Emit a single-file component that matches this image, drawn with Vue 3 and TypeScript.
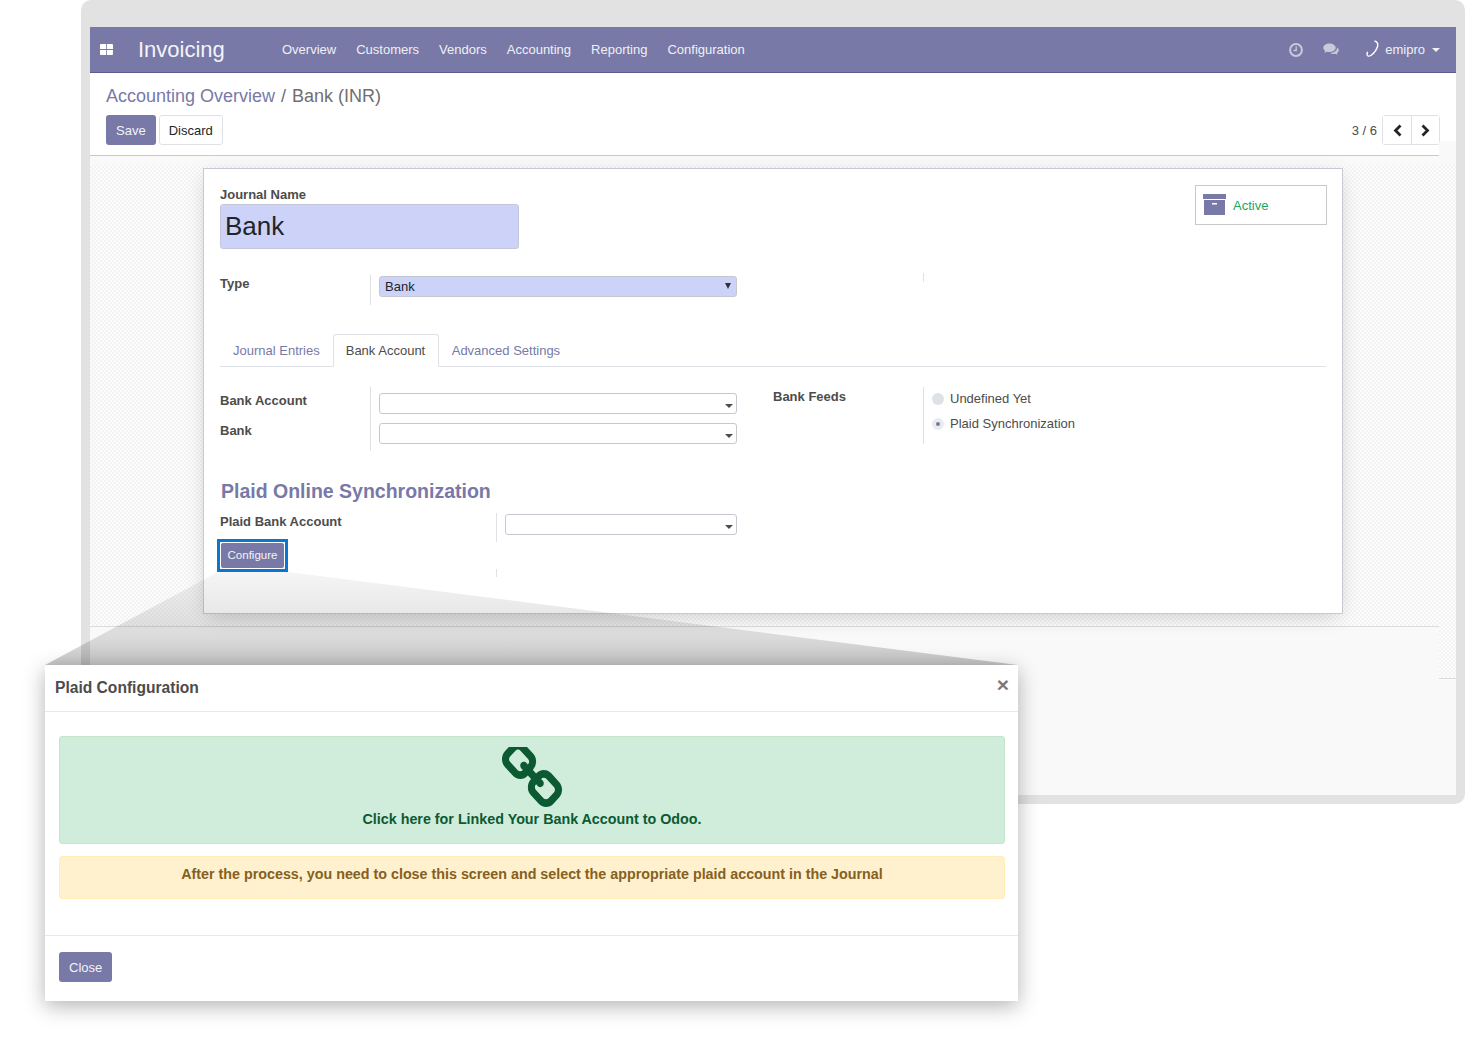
<script setup lang="ts">
const menus: string[] = ['Overview', 'Customers', 'Vendors', 'Accounting', 'Reporting', 'Configuration']
</script>

<template>
  <div class="root">
    <div class="window">
      <div class="app">
        <nav class="navbar">
          <svg class="apps" width="13" height="11" viewBox="0 0 13 11"><path d="M1 0h4.800a.4.400 0 0 1 .4.4V5H0V1a1 1 0 0 1 1-1zM7 0h5a1 1 0 0 1 1 1V5H7zM0 6h6.200v5H1a1 1 0 0 1-1-1zM7 6h6v4a1 1 0 0 1-1 1H7z" fill="#fff"/></svg>
          <span class="brand">Invoicing</span>
          <div class="menu"><span v-for="m in menus" :key="m">{{ m }}</span></div>
          <div class="systray">
            <svg width="14" height="14" viewBox="0 0 14 14" class="tray-icon"><circle cx="7" cy="7" r="5.900" fill="none" stroke="#c9c9dc" stroke-width="2"/><path d="M7.200 3.500V7.500H4.500" fill="none" stroke="#c9c9dc" stroke-width="1.300"/></svg>
            <svg width="16" height="13" viewBox="0 0 16 13" class="tray-icon chat"><path d="M6.500 0.500C3 .5.300 2.400.300 4.800c0 1.300.8 2.500 2 3.300-.2.600-.6 1.200-1.100 1.700 1.100-.1 2-.5 2.800-1 .8.200 1.600.3 2.500.3 3.400 0 6.200-1.900 6.200-4.300S9.900.5 6.500.5z" fill="#c9c9dc"/><path d="M14 4.200c.1.200.1.400.1.600 0 3-3.100 5.100-6.800 5.200.9.700 2.100 1 3.300 1 .6 0 1.200-.1 1.800-.2.700.5 1.500.8 2.300 1-.3-.5-.6-1-.8-1.500 1.200-.8 1.900-1.900 1.900-3 0-1.100-.7-2.300-1.800-3.100z" fill="#c9c9dc"/></svg>
            <svg width="14" height="18" viewBox="0 0 14 18" class="avatar"><path d="M8.500 1C11 1.500 12.300 3.500 11.500 6.500 10.700 9.500 8 13 5.500 15 4 16.200 2 16.600 1.300 15.200.9 14.300 1 13 1.700 11.800" fill="none" stroke="#fff" stroke-width="1.400"/></svg>
            <span class="user">emipro</span>
            <span class="caret"></span>
          </div>
        </nav>

        <header class="panel">
          <div class="crumbs"><span class="crumb-link">Accounting Overview</span><span class="crumb-sep">/</span><span>Bank (INR)</span></div>
          <div class="panel-row">
            <div class="actions">
              <button class="btn primary">Save</button>
              <button class="btn plain">Discard</button>
            </div>
            <div class="pager">
              <span class="pager-text">3 / 6</span>
              <div class="pager-btns">
                <button class="pg"><svg width="10" height="13" viewBox="0 0 10 13"><path d="M8.500 1.500L3.500 6.500l5 5" fill="none" stroke="#212529" stroke-width="2.800"/></svg></button>
                <button class="pg"><svg width="10" height="13" viewBox="0 0 10 13"><path d="M1.500 1.500l5 5-5 5" fill="none" stroke="#212529" stroke-width="2.800"/></svg></button>
              </div>
            </div>
          </div>
        </header>

        <div class="content">
          <div class="canvas">
            <section class="sheet">
              <div class="title-row">
                <div>
                  <div class="label name-label">Journal Name</div>
                  <div class="name-input">Bank</div>
                </div>
                <div class="stat">
                  <svg width="23" height="22" viewBox="0 0 23 22"><rect x="0" y="0" width="23" height="5" fill="#7879a7"/><rect x="1" y="6" width="21" height="15" fill="#7879a7"/><rect x="9" y="9" width="5" height="1.500" fill="#fff"/></svg>
                  <span>Active</span>
                </div>
              </div>

              <div class="type-row">
                <div class="label side-label">Type</div>
                <div class="divider type-div">
                  <div class="select req">Bank<span class="tri-native"></span></div>
                </div>
                <i class="tick"></i>
              </div>

              <div class="tabs">
                <span class="tab">Journal Entries</span>
                <span class="tab active">Bank Account</span>
                <span class="tab">Advanced Settings</span>
              </div>

              <div class="columns">
                <div class="col-left">
                  <div class="labels">
                    <div class="label">Bank Account</div>
                    <div class="label">Bank</div>
                  </div>
                  <div class="divider fields">
                    <div class="select"><span class="tri"></span></div>
                    <div class="select"><span class="tri"></span></div>
                  </div>
                </div>
                <div class="col-right">
                  <div class="label feeds-label">Bank Feeds</div>
                  <div class="divider radios">
                    <div class="radio"><i class="dot"></i>Undefined Yet</div>
                    <div class="radio"><i class="dot on"></i>Plaid Synchronization</div>
                  </div>
                </div>
              </div>

              <h2 class="section">Plaid Online Synchronization</h2>
              <div class="plaid-grid">
                <div class="label plaid-label">Plaid Bank Account</div>
                <div class="divider plaid-field"><div class="select"><span class="tri"></span></div></div>
                <div class="configure-cell"><div class="focus-ring"><button class="configure">Configure</button></div></div>
                <div class="divider plaid-tick"></div>
              </div>
            </section>
          </div>
          <div class="side-strip"></div>
        </div>
      </div>
    </div>

    <div class="wedge"></div>

    <div class="modal">
      <div class="modal-head">
        <span>Plaid Configuration</span>
        <span class="close-x">×</span>
      </div>
      <div class="modal-body">
        <div class="alert green">
          <svg width="60" height="60" viewBox="80 144 1632 1504" preserveAspectRatio="none" class="chain">
            <path fill="#0b5a32" d="M1520 1216q0-40-28-68l-208-208q-28-28-68-28-42 0-72 32 3 3 19 18.500t21.500 21.500 15 19 13 25.500 3.500 27.500q0 40-28 68t-68 28q-15 0-27.500-3.500t-25.500-13-19-15-21.500-21.500-18.500-19q-33 31-33 73 0 40 28 68l206 207q27 27 68 27 40 0 68-26l147-146q28-28 28-67zm-703-705q0-40-28-68l-206-207q-28-28-68-28-39 0-68 27l-147 146q-28 28-28 67 0 40 28 68l208 208q27 27 68 27 42 0 72-31-3-3-19-18.500t-21.500-21.500-15-19-13-25.500-3.500-27.500q0-40 28-68t68-28q15 0 27.500 3.500t25.500 13 19 15 21.500 21.500 18.500 19q33-31 33-73zm895 705q0 120-85 203l-147 146q-83 83-203 83-121 0-204-85l-206-207q-83-83-83-203 0-123 88-209l-88-88q-86 88-208 88-120 0-204-84l-208-208q-84-84-84-204t85-203l147-146q83-83 203-83 121 0 204 85l206 207q83 83 83 203 0 123-88 209l88 88q86-88 208-88 120 0 204 84l208 208q84 84 84 204z"/>
          </svg>
          <div class="green-text">Click here for Linked Your Bank Account to Odoo.</div>
        </div>
        <div class="alert yellow">After the process, you need to close this screen and select the appropriate plaid account in the Journal</div>
      </div>
      <div class="modal-foot"><button class="btn primary">Close</button></div>
    </div>
  </div>
</template>

<style>
body { margin: 0; background: #fff; }
</style>

<style scoped>
* { box-sizing: border-box; }
.root {
  position: relative;
  width: 1465px;
  height: 1049px;
  overflow: hidden;
  background: #fff;
  font-family: "Liberation Sans", Arial, sans-serif;
  font-size: 13px;
  color: #4c4c4c;
}
.window {
  position: absolute;
  left: 81px;
  top: 0;
  width: 1384px;
  height: 804px;
  padding: 27px 9px 9px;
  background: #e2e2e2;
  border-radius: 10px;
}
.app {
  height: 768px;
  background: #f9f9f9;
  display: flex;
  flex-direction: column;
}
.navbar {
  height: 46px;
  background: #7879a7;
  border-bottom: 1px solid #5c5d8c;
  display: flex;
  align-items: center;
  color: #fff;
  flex: none;
}
.apps { margin-left: 10px; flex: none; }
.brand { margin-left: 25px; font-size: 22px; width: 144px; color: #f3f3f8; }
.menu { display: flex; gap: 20px; color: #f0f0f5; }
.systray { margin-left: auto; display: flex; align-items: center; padding-right: 16px; }
.tray-icon { display: block; margin-right: 20px; }
.chat { margin-right: 27px; }
.avatar { margin-right: 5px; margin-top: -2px; }
.user { color: #f0f0f5; }
.caret { margin-left: 7px; border: 4px solid transparent; border-top-color: #f0f0f5; border-bottom: 0; }

.panel { height: 83px; background: #fff; border-bottom: 1px solid #c9c9c9; padding: 11px 16px 0; flex: none; position: relative; }
.crumbs { font-size: 18px; line-height: 24px; color: #6f6f6f; display: flex; }
.crumb-link { color: #7879a7; }
.crumb-sep { margin: 0 6px; }
.panel-row { display: flex; justify-content: space-between; margin-top: 7px; }
.actions { display: flex; gap: 3px; }
.btn {
  font-family: inherit;
  font-size: 13px;
  height: 30px;
  padding: 0 9px;
  border-radius: 3px;
  border: 1px solid transparent;
  cursor: pointer;
}
.primary { background: #7879a7; color: #f3f3f8; }
.plain { background: #fff; color: #212529; border-color: #dee2e6; }
.pager { display: flex; align-items: center; gap: 5px; }
.pager-text { color: #4c4c4c; }
.pager-btns { display: flex; border: 1px solid #dee2e6; border-radius: 3px; height: 30px; }
.pg { width: 28px; height: 28px; padding: 0; background: #fff; border: 0; display: flex; align-items: center; justify-content: center; }
.pg + .pg { border-left: 1px solid #dee2e6; }

.content { flex: 1; display: flex; min-height: 0; position: relative; }
.canvas {
  width: 1349px;
  height: 471px;
  border-bottom: 1px solid #dcdcdc;
  padding: 12px 96px 0 113px;
  background:
    linear-gradient(#f9f9f9, #f9f9f9) top / 100% 9px no-repeat,
    repeating-conic-gradient(#f3f3f3 0 25%, #fcfcfc 0 50%) 0 0 / 4px 4px;
}
.side-strip {
  position: relative;
  width: 17px;
  height: 523px;
  border-bottom: 1px solid #dcdcdc;
  background:
    linear-gradient(#f9f9f9, #f9f9f9) top / 100% 7px no-repeat,
    repeating-conic-gradient(#f3f3f3 0 25%, #fcfcfc 0 50%) 0 0 / 4px 4px;
}
.side-strip::before {
  content: "";
  position: absolute;
  left: 0;
  top: -15px;
  width: 100%;
  height: 15px;
  background: #f9f9f9;
  border-radius: 3px 0 0 0;
}
.sheet {
  height: 446px;
  background: #fff;
  border: 1px solid #c9c9d6;
  box-shadow: 0 5px 20px -5px rgba(0, 0, 0, .22);
  padding: 18px 16px 0;
}
.label { font-weight: 700; line-height: 17px; color: #4c4c4c; }
.name-label { margin-top: -1px; margin-bottom: 1px; }
.title-row { display: flex; justify-content: space-between; height: 62px; }
.name-input {
  width: 299px;
  height: 45px;
  background: #cdd3f8;
  border: 1px solid #c6c8d8;
  border-radius: 3px;
  font-size: 26px;
  line-height: 43px;
  padding-left: 4px;
  color: #212529;
}
.stat {
  width: 132px;
  height: 40px;
  margin-top: -2px;
  margin-right: -1px;
  border: 1px solid #c9c9c9;
  padding-left: 7px;
  display: flex;
  align-items: center;
  gap: 7px;
  color: #17a762;
}
.type-row { display: flex; margin-top: 26px; height: 59px; }
.side-label { width: 150px; flex: none; }
.divider { border-left: 1px solid #dee2e6; }
.type-div { height: 30px; padding: 1px 0 0 8px; }
.select {
  position: relative;
  width: 358px;
  height: 21px;
  border: 1px solid #c6c8d0;
  border-radius: 3px;
  background: #fff;
  color: #212529;
  padding-left: 5px;
  line-height: 20px;
}
.req { background: #cdd3f8; }
.tri-native { position: absolute; right: 5px; top: 6px; border: 3.500px solid transparent; border-top: 6px solid #333; border-bottom: 0; }
.tri { position: absolute; right: 3px; top: 10px; border: 4px solid transparent; border-top-color: #4c4c4c; border-bottom: 0; }
.tick { display: block; width: 1px; height: 9px; background: #dee2e6; margin-left: 186px; margin-top: -2px; }
.tabs { display: flex; border-bottom: 1px solid #dee2e6; height: 33px; }
.tab { padding: 0 13px; line-height: 33px; color: #7879a7; height: 33px; }
.tab.active { color: #4c4c4c; background: #fff; border: 1px solid #dee2e6; border-bottom-color: #fff; border-radius: 3px 3px 0 0; padding: 0 12px; width: 106px; line-height: 31px; }
.columns { display: flex; margin-top: 20px; height: 64px; }
.col-left { display: flex; width: 553px; }
.labels { width: 150px; padding-top: 5px; flex: none; display: flex; flex-direction: column; gap: 13px; }
.fields { height: 64px; padding: 6px 0 0 8px; display: flex; flex-direction: column; gap: 9px; }
.col-right { display: flex; }
.feeds-label { width: 150px; padding-top: 1px; }
.radios { height: 57px; padding: 3px 0 0 8px; }
.radio { display: flex; align-items: center; height: 17px; gap: 6px; margin-bottom: 8px; color: #4c4c4c; }
.dot { width: 12px; height: 12px; border-radius: 50%; background: #dee2e6; position: relative; flex: none; }
.dot.on { background: #e9ecef; }
.dot.on::after { content: ""; position: absolute; left: 4px; top: 4px; width: 4px; height: 4px; border-radius: 50%; background: #7879a7; }
.section { margin: 27px 0 0 1px; font-size: 19.500px; line-height: 26px; font-weight: 700; color: #7879a7; }
.plaid-grid { display: grid; grid-template-columns: 276px 1fr; margin-top: 9px; }
.plaid-label { height: 25px; }
.plaid-field { height: 29px; padding: 1px 0 0 8px; }
.plaid-field .select { width: 232px; }
.configure-cell { height: 29px; }
.plaid-tick { height: 8px; margin-top: 27px; }
.focus-ring {
  width: 71px;
  height: 33px;
  margin: -3px 0 0 -3px;
  border: 3px solid #0a76d2;
  background: #fff;
}
.configure {
  display: block;
  width: 65px;
  height: 27px;
  font-family: inherit;
  font-size: 11.500px;
  color: #f3f3f8;
  background: #7879a7;
  border: 1px solid #fff;
  border-radius: 3px;
  padding: 0 0 1px;
}

.wedge {
  position: absolute;
  left: 45px;
  top: 572px;
  width: 973px;
  height: 93px;
  background: linear-gradient(to bottom, rgba(0, 0, 0, .04) 0%, rgba(0, 0, 0, .12) 70%, rgba(0, 0, 0, .22) 100%);
  clip-path: polygon(173px 0, 243px 0, 973px 93px, 0 93px);
}
.modal {
  position: absolute;
  left: 45px;
  top: 665px;
  width: 973px;
  height: 336px;
  background: #fff;
  box-shadow: 0 5px 20px rgba(0, 0, 0, .3);
  display: flex;
  flex-direction: column;
}
.modal-head {
  height: 47px;
  flex: none;
  border-bottom: 1px solid #e9e9e9;
  padding: 0 9px 0 10px;
  display: flex;
  justify-content: space-between;
  align-items: center;
  font-size: 15.600px;
  font-weight: 700;
  color: #4c4c4c;
}
.close-x { font-size: 21px; color: #7a7a7a; margin-top: -6px; }
.modal-body { padding: 24px 13px 0 14px; height: 224px; flex: none; border-bottom: 1px solid #e9e9e9; }
.alert { border: 1px solid; border-radius: 3px; font-weight: 700; font-size: 14.300px; text-align: center; }
.green { height: 108px; background: #d0ecdb; border-color: #c3e6cb; color: #0b5a32; }
.chain { display: block; margin: 10px auto 0; }
.green-text { margin-top: 4px; line-height: 16px; }
.yellow { height: 43px; margin-top: 12px; background: #fff1cd; border-color: #ffeeba; color: #856022; line-height: 33px; padding-top: 1px; }
.modal-foot { padding: 16px 14px; }
</style>
